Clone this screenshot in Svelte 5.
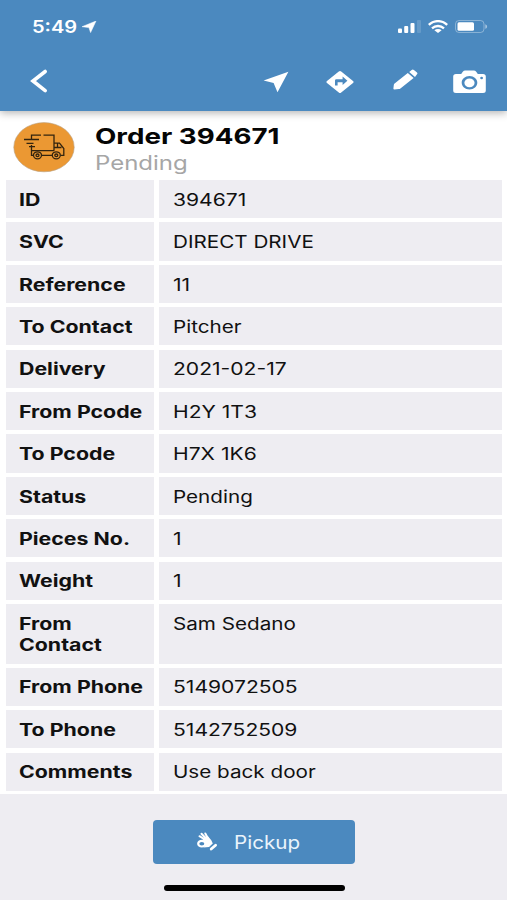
<script>
  const rows = [
    { label: "ID", value: "394671" },
    { label: "SVC", value: "DIRECT DRIVE" },
    { label: "Reference", value: "11" },
    { label: "To Contact", value: "Pitcher" },
    { label: "Delivery", value: "2021-02-17" },
    { label: "From Pcode", value: "H2Y 1T3" },
    { label: "To Pcode", value: "H7X 1K6" },
    { label: "Status", value: "Pending" },
    { label: "Pieces No.", value: "1" },
    { label: "Weight", value: "1" },
    { label: "From Contact", value: "Sam Sedano" },
    { label: "From Phone", value: "5149072505" },
    { label: "To Phone", value: "5142752509" },
    { label: "Comments", value: "Use back door" },
  ];
</script>

<style>
  :global(body) {
    background: #fff;
  }

  .screen {
    display: flex;
    flex-direction: column;
    width: 507px;
    height: 900px;
    overflow: hidden;
    font-family: Inter, "Liberation Sans", sans-serif;
    color: #111;
    background: #fff;
  }

  svg {
    display: block;
    fill: #fff;
  }

  /* all type is set wide */
  .wide {
    display: block;
    white-space: nowrap;
    transform: scaleX(var(--stretch, 1.215));
    transform-origin: left center;
  }

  header {
    flex: none;
    box-sizing: border-box;
    height: 111px;
    color: #fff;
    background: #4b89bf;
    box-shadow: 0 2px 8px rgba(0, 0, 0, 0.3);
  }

  .status {
    display: flex;
    align-items: center;
    height: 53px;
    padding: 0 19px 0 32px;
  }
  .time {
    --stretch: 1.18;
    width: 50px;
    font-size: 17px;
    font-weight: 600;
  }
  .signal {
    margin-left: auto;
  }
  .wifi {
    margin: 0 7px 0 7px;
  }

  nav {
    display: flex;
    align-items: center;
    height: 56px;
    padding: 0 21.5px 0 29px;
  }
  .locate {
    margin: 2px 0 0 auto;
  }
  .directions {
    margin: 2px 0 0 37px;
  }
  .edit {
    margin: -4px 0 0 39px;
  }
  .camera {
    margin: 1px 0 0 35px;
  }

  .order {
    flex: none;
    display: flex;
    height: 69px;
    padding-left: 13px;
  }
  .order svg {
    margin: 11px 20px 0 0;
  }
  h1 {
    --stretch: 1.26;
    margin: 11px 0 0;
    font-size: 22px;
    line-height: 28px;
    font-weight: 700;
    color: #050505;
  }
  .state {
    --stretch: 1.23;
    font-size: 19.5px;
    line-height: 27px;
    color: #a6a6a6;
  }

  dl {
    flex: none;
    display: grid;
    grid-template-columns: 148.4px 343.4px;
    gap: 4.2px;
    margin: 0 0 2.8px 6px;
    font-size: 17px;
    line-height: 21.3px;
  }
  dt,
  dd {
    margin: 0;
    padding: 9.7px 0 7.24px 14px;
    background: #eeedf2;
  }
  dt {
    padding-left: 12.8px;
    font-weight: 700;
  }
  dt .wide {
    --stretch: 1.255;
    width: 103px;
    white-space: normal;
  }
  /* numerals run a little wider than words */
  dd.numeric {
    --stretch: 1.24;
  }

  footer {
    flex: 1;
    display: flex;
    flex-direction: column;
    align-items: center;
    background: #eeedf2;
  }
  button {
    display: flex;
    align-items: center;
    box-sizing: border-box;
    width: 202px;
    height: 44px;
    margin: 26.5px 0 0;
    padding: 0 0 0 43px;
    border: 0;
    border-radius: 4px;
    font: 18px Inter, "Liberation Sans", sans-serif;
    color: #eaf4fc;
    background: #4b89bf;
  }
  button .wide {
    --stretch: 1.145;
  }
  button svg {
    margin: -2px 16px 0 0;
  }
  .home {
    width: 181px;
    height: 6px;
    margin: 21px 0 0 1px;
    border-radius: 3px;
    background: #000;
  }
</style>

<div class="screen">
  <header>
    <div class="status">
      <div class="time"><span class="wide">5:49</span></div>
      <svg width="15" height="12" viewBox="0 0 15 12"><path d="M14 0 8.6 11.6 6.9 6.6 0 5.7Z" stroke="#fff" stroke-width=".5" stroke-linejoin="round" /></svg>
      <svg class="signal" width="23" height="13" viewBox="0 0 23 13">
        <rect x="0" y="8.5" width="4" height="4.5" rx="1" />
        <rect x="6.2" y="6" width="4" height="7" rx="1" />
        <rect x="12.5" y="3" width="4" height="10" rx="1" />
        <rect x="19" y="0" width="4" height="13" rx="1" opacity=".15" />
      </svg>
      <svg class="wifi" width="20" height="13" viewBox="0 0 20 13">
        <g fill="none" stroke="#fff" stroke-width="2.4">
          <path d="M.8 4.9C6-.1 14-.1 19.2 4.9" />
          <path d="M4 8.3c3.5-3 8.5-3 12 0" />
        </g>
        <path d="M6.4 10.2c2-1.5 5.2-1.5 7.2 0L10 13Z" />
      </svg>
      <svg width="33" height="13" viewBox="0 0 33 13">
        <rect x=".5" y=".5" width="28.5" height="12" rx="3.5" fill="none" stroke="#fff" opacity=".35" />
        <rect x="2.5" y="2.2" width="16.5" height="8.6" rx="1.5" />
        <path d="M30.3 4.2c2.4.8 2.4 3.8 0 4.6Z" opacity=".5" />
      </svg>
    </div>
    <nav>
      <svg width="20" height="26" viewBox="0 0 20 26">
        <path d="M16.2 3.5 4 13l12.2 9.6" fill="none" stroke="#fff" stroke-width="3.6" stroke-linecap="round" />
      </svg>
      <svg class="locate" width="26" height="22" viewBox="0 0 26 22"><path d="M25.4.8 14.5 21.3 10.6 11.9.6 9.6Z" /></svg>
      <svg class="directions" width="28" height="24" viewBox="0 0 28 24">
        <path fill-rule="evenodd" d="M12.8 1.5q1.2-1 2.4 0L27 11q1.2 1 0 2L15.2 22.6q-1.2 1-2.4 0L1 13q-1.2-1 0-2ZM9 15.5h2.6v-3.3h5v2.7l4.8-4.2-4.8-4.1v2.7h-6.2q-1.4 0-1.4 1.3Z" />
      </svg>
      <svg class="edit" width="25" height="21" viewBox="0 0 25 21">
        <path d="m14.8 4 5.8 5L7.4 19.5q-.6.5-1.5.6l-4.5.4q-1.1 0-1-.9l.4-3.7q.1-.8.8-1.3ZM16.2 2.9l2.5-2q1.1-.8 2.2 0l3.1 2.7q1 .9 0 1.7L22 7.9Z" />
      </svg>
      <svg class="camera" width="33" height="24" viewBox="0 0 33 24">
        <path fill-rule="evenodd" d="M3 4h5.2l1.6-2.3Q10.7.5 12.2.5h8.6q1.5 0 2.4 1.2L24.8 4H30q2.8 0 2.8 2.5v14q0 2.5-2.8 2.5H3Q.2 23 .2 20.500v-14Q.2 4 3 4Zm13.500 2.100c-4.400 0-7.800 3-7.800 6.700s3.400 6.700 7.800 6.700 7.800-3 7.800-6.700-3.400-6.700-7.800-6.700ZM28.600 6.800a1.400 1.200 0 1 0 0 2.400 1.400 1.200 0 1 0 0-2.400Z" />
        <ellipse cx="16.5" cy="12.8" rx="5.1" ry="4.4" />
      </svg>
    </nav>
  </header>

  <section class="order">
    <svg width="62" height="51" viewBox="0 0 62 51">
      <ellipse cx="31" cy="25.2" rx="30.2" ry="24.6" fill="#eb9833" stroke="#b8a184" stroke-width=".6" />
      <g fill="none" stroke="#33240f" stroke-width="1.3">
        <path d="M18.5 17.5v-4.3H28M30.5 13.2H41v15.500M18.500 23v10.300h2M28.500 33.300h10.500M18.500 28.700h22.500M41 21.200h5.500l4.300 5.300v6.800H47.500M41 25.500h7.500M44.500 21.500v3.500" />
        <path d="M11 17.5h15M13.5 21.3h7M16 24.7h6" />
        <ellipse cx="24.5" cy="33.3" rx="4" ry="3.5" />
        <ellipse cx="24.5" cy="33.3" rx="1.5" ry="1.3" />
        <ellipse cx="43.3" cy="33.3" rx="4" ry="3.5" />
        <ellipse cx="43.3" cy="33.3" rx="1.5" ry="1.3" />
      </g>
    </svg>
    <div>
      <h1><span class="wide">Order 394671</span></h1>
      <div class="state"><span class="wide">Pending</span></div>
    </div>
  </section>

  <dl>
    {#each rows as row}
      <dt><span class="wide">{row.label}</span></dt>
      <dd class:numeric={/\d/.test(row.value)}><span class="wide">{row.value}</span></dd>
    {/each}
  </dl>

  <footer>
    <button>
      <svg width="22" height="19" viewBox="0 0 22 19">
        <g fill="none" stroke="#fff" stroke-linecap="round">
          <path d="M8 7 3.5 4.2M9.5 6 5.5 1.8M11.5 5.5 9.3 1.5" stroke-width="2" />
          <ellipse cx="5.8" cy="11.7" rx="3.6" ry="2.8" stroke-width="2.2" />
          <path d="m15.2 17 4.4-3.8" stroke-width="2.8" />
        </g>
        <path d="M6.5 7.8 9 5 12.2 4.6 15.3 8.3 16.8 11.4 13 14.900 7.500 15.500 9.900 12.500Q9.500 9.500 6.500 7.800Z" />
      </svg>
      <span class="wide">Pickup</span>
    </button>
    <div class="home"></div>
  </footer>
</div>
